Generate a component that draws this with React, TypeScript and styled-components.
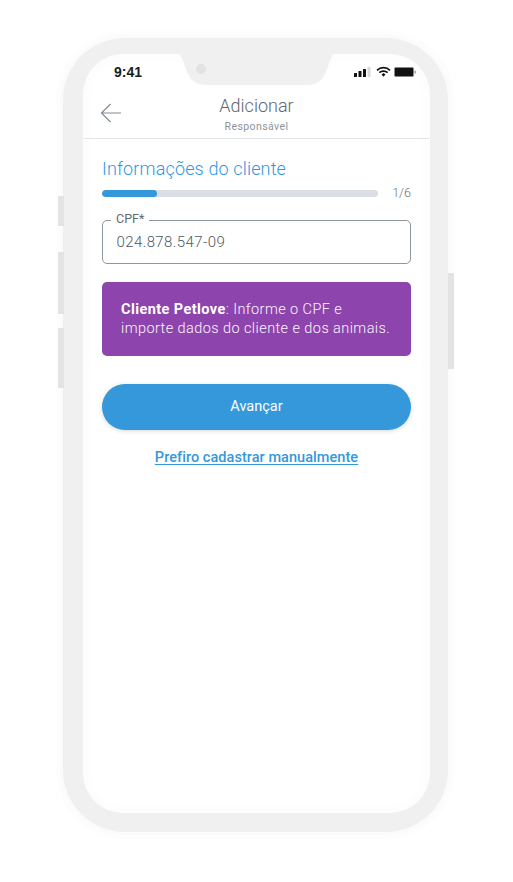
import React from "react";
import styled, { createGlobalStyle } from "styled-components";

const Global = createGlobalStyle`
  html, body { margin: 0; padding: 0; background: #fff; }
  body { width: 513px; height: 882px; overflow: hidden; font-family: "Roboto", "Noto Sans", sans-serif; }
`;

const Page = styled.div`
  width: 513px;
  height: 882px;
  padding: 38px 65px 50px 63px;
  box-sizing: border-box;
`;

const Phone = styled.div`
  position: relative;
  width: 385px;
  height: 794px;
  padding: 16px 18px 19px 20px;
  box-sizing: border-box;
  background: #f0f0f0;
  border-radius: 62px;
  box-shadow: 0 0 0 3px #fbfbfb, 0 0 0 7px #fdfdfd;
`;

const SideKey = styled.div<{ $top: number; $height: number; $right?: boolean }>`
  position: absolute;
  top: ${(p) => p.$top}px;
  height: ${(p) => p.$height}px;
  width: 6px;
  background: #e3e3e3;
  ${(p) => (p.$right ? "right: -6px;" : "left: -5px;")}
`;

const Screen = styled.div`
  position: relative;
  height: 100%;
  background: #fff;
  border-radius: 40px;
  overflow: hidden;
  box-shadow: inset 0 0 18px rgba(0, 0, 0, 0.025);
`;

const Notch = styled.svg`
  position: absolute;
  left: 96px;
  top: 0;
`;

const StatusBar = styled.div`
  height: 38px;
  box-sizing: border-box;
  padding: 10px 14px 0 31px;
  display: flex;
  align-items: flex-start;
  justify-content: space-between;
`;

const Clock = styled.span`
  font: 700 14px/16px "Liberation Sans", sans-serif;
  color: #1c1c1c;
`;

const StatusIcons = styled.svg`
  margin-top: 2px;
`;

const Header = styled.header`
  position: relative;
  height: 47px;
  margin: 0 1px;
  box-sizing: border-box;
  border-bottom: 1px solid #dfe4e8;
  display: flex;
  flex-direction: column;
  align-items: center;
  padding-top: 3px;
`;

const BackIcon = styled.svg`
  position: absolute;
  left: 16px;
  top: 11px;
`;

const Title = styled.h1`
  margin: 0;
  font: 300 18px/22px "Roboto", sans-serif;
  color: #5f6870;
`;

const Subtitle = styled.span`
  font: 400 10.5px/14px "Roboto", sans-serif;
  color: #8b949b;
  margin-top: 3px;
  letter-spacing: 0.42px;
`;

const Content = styled.main`
  padding: 19px 19px 0;
  display: flex;
  flex-direction: column;
`;

const SectionTitle = styled.h2`
  margin: 0;
  font: 300 18px/22px "Roboto", sans-serif;
  color: #2f97e0;
  letter-spacing: 0.15px;
`;

const ProgressRow = styled.div`
  display: flex;
  align-items: center;
  justify-content: space-between;
  margin-top: 7px;
  height: 12px;
`;

const Track = styled.div`
  width: 276px;
  height: 7px;
  border-radius: 4px;
  background: #d9dfe4;
  overflow: hidden;
`;

const Fill = styled.div`
  height: 100%;
  border-radius: 4px;
  background: #3498db;
`;

const StepCount = styled.span`
  font: 300 12.5px/14px "Roboto", sans-serif;
  color: #6a7379;
`;

const Field = styled.div`
  position: relative;
  margin-top: 21px;
  height: 44px;
  box-sizing: border-box;
  border: 1px solid #8d979e;
  border-radius: 5px;
  padding: 0 13px;
  display: flex;
  align-items: center;
`;

const FieldLabel = styled.label`
  position: absolute;
  left: 8px;
  top: -9px;
  padding: 0 5px;
  background: #fff;
  font: 400 12.5px/14px "Roboto", sans-serif;
  color: #5f6870;
`;

const FieldValue = styled.span`
  font: 300 15px/18px "Roboto", sans-serif;
  color: #4f585f;
  letter-spacing: 0.4px;
  margin-left: 0.5px;
`;

const Notice = styled.div`
  margin-top: 18px;
  height: 74px;
  box-sizing: border-box;
  padding: 18px 18px 0 19px;
  background: #8e44ad;
  border-radius: 5px;
  font: 300 14.5px/19px "Roboto", sans-serif;
  color: #fbf6fd;
  letter-spacing: 0.42px;
  white-space: nowrap;
`;

const NoticeStrong = styled.strong`
  font-weight: 700;
  color: #fff;
`;

const PrimaryButton = styled.button`
  margin-top: 28px;
  height: 46px;
  width: 100%;
  border: 0;
  border-radius: 23px;
  background: #3498db;
  box-shadow: 0 1px 4px rgba(0, 0, 0, 0.16);
  font: 400 14.5px/18px "Roboto", sans-serif;
  color: #fff;
`;

const ManualLink = styled.a`
  margin-top: 19px;
  align-self: center;
  font: 500 14.5px/17px "Roboto", sans-serif;
  color: #3498db;
  letter-spacing: 0.05px;
  text-decoration: underline;
  text-underline-offset: 2px;
`;

export default function App() {
  return (
    <>
      <Global />
      <Page>
        <Phone>
          <SideKey $top={158} $height={30} />
          <SideKey $top={214} $height={62} />
          <SideKey $top={290} $height={60} />
          <SideKey $top={235} $height={96} $right />
          <Screen>
            <Notch width="155" height="32" viewBox="0 0 155 32">
              <path d="M1 0 H154 C150 8 149 14 146 20 C143 27 137 31 128 31 H27 C18 31 12 27 9 20 C6 14 5 8 1 0 Z" fill="#f0f0f0" />
              <circle cx="22" cy="15" r="5" fill="#e2e2e2" />
            </Notch>
            <StatusBar>
              <Clock>9:41</Clock>
              <StatusIcons width="62" height="12" viewBox="0 0 62 12">
                <rect x="0" y="7" width="3" height="4" rx="0.5" fill="#111" />
                <rect x="4.5" y="5" width="3" height="6" rx="0.5" fill="#111" />
                <rect x="9" y="3" width="3" height="8" rx="0.5" fill="#111" />
                <rect x="13.5" y="1" width="3" height="10" rx="0.5" fill="#d8d8d8" />
                <path d="M23 4.4 C26.6 0.8 32.4 0.8 36 4.4" fill="none" stroke="#111" strokeWidth="1.7" />
                <path d="M25.3 6.6 C27.6 4.5 31.4 4.5 33.7 6.6" fill="none" stroke="#111" strokeWidth="1.7" />
                <path d="M27.6 8.6 L29.5 6.9 L31.4 8.6 L29.5 10.8 Z" fill="#111" />
                <rect x="40.5" y="1.5" width="19" height="9" rx="1.2" fill="#111" stroke="#8a8a8a" strokeWidth="0.8" />
                <rect x="60.4" y="4.4" width="1.4" height="3.4" rx="0.7" fill="#9a9a9a" />
              </StatusIcons>
            </StatusBar>
            <Header>
              <BackIcon width="22" height="20" viewBox="0 0 22 20">
                <path d="M21 10 H1.5 M10.5 1 L1.5 10 L10.5 19" fill="none" stroke="#838c93" strokeWidth="1.2" />
              </BackIcon>
              <Title>Adicionar</Title>
              <Subtitle>Responsável</Subtitle>
            </Header>
            <Content>
              <SectionTitle>Informações do cliente</SectionTitle>
              <ProgressRow>
                <Track>
                  <Fill style={{ width: `${(1 / 5) * 100}%` }} />
                </Track>
                <StepCount>1/6</StepCount>
              </ProgressRow>
              <Field>
                <FieldLabel>CPF*</FieldLabel>
                <FieldValue>024.878.547-09</FieldValue>
              </Field>
              <Notice>
                <NoticeStrong>Cliente Petlove</NoticeStrong>: Informe o CPF e
                <br />
                importe dados do cliente e dos animais.
              </Notice>
              <PrimaryButton>Avançar</PrimaryButton>
              <ManualLink>Prefiro cadastrar manualmente</ManualLink>
            </Content>
          </Screen>
        </Phone>
      </Page>
    </>
  );
}
